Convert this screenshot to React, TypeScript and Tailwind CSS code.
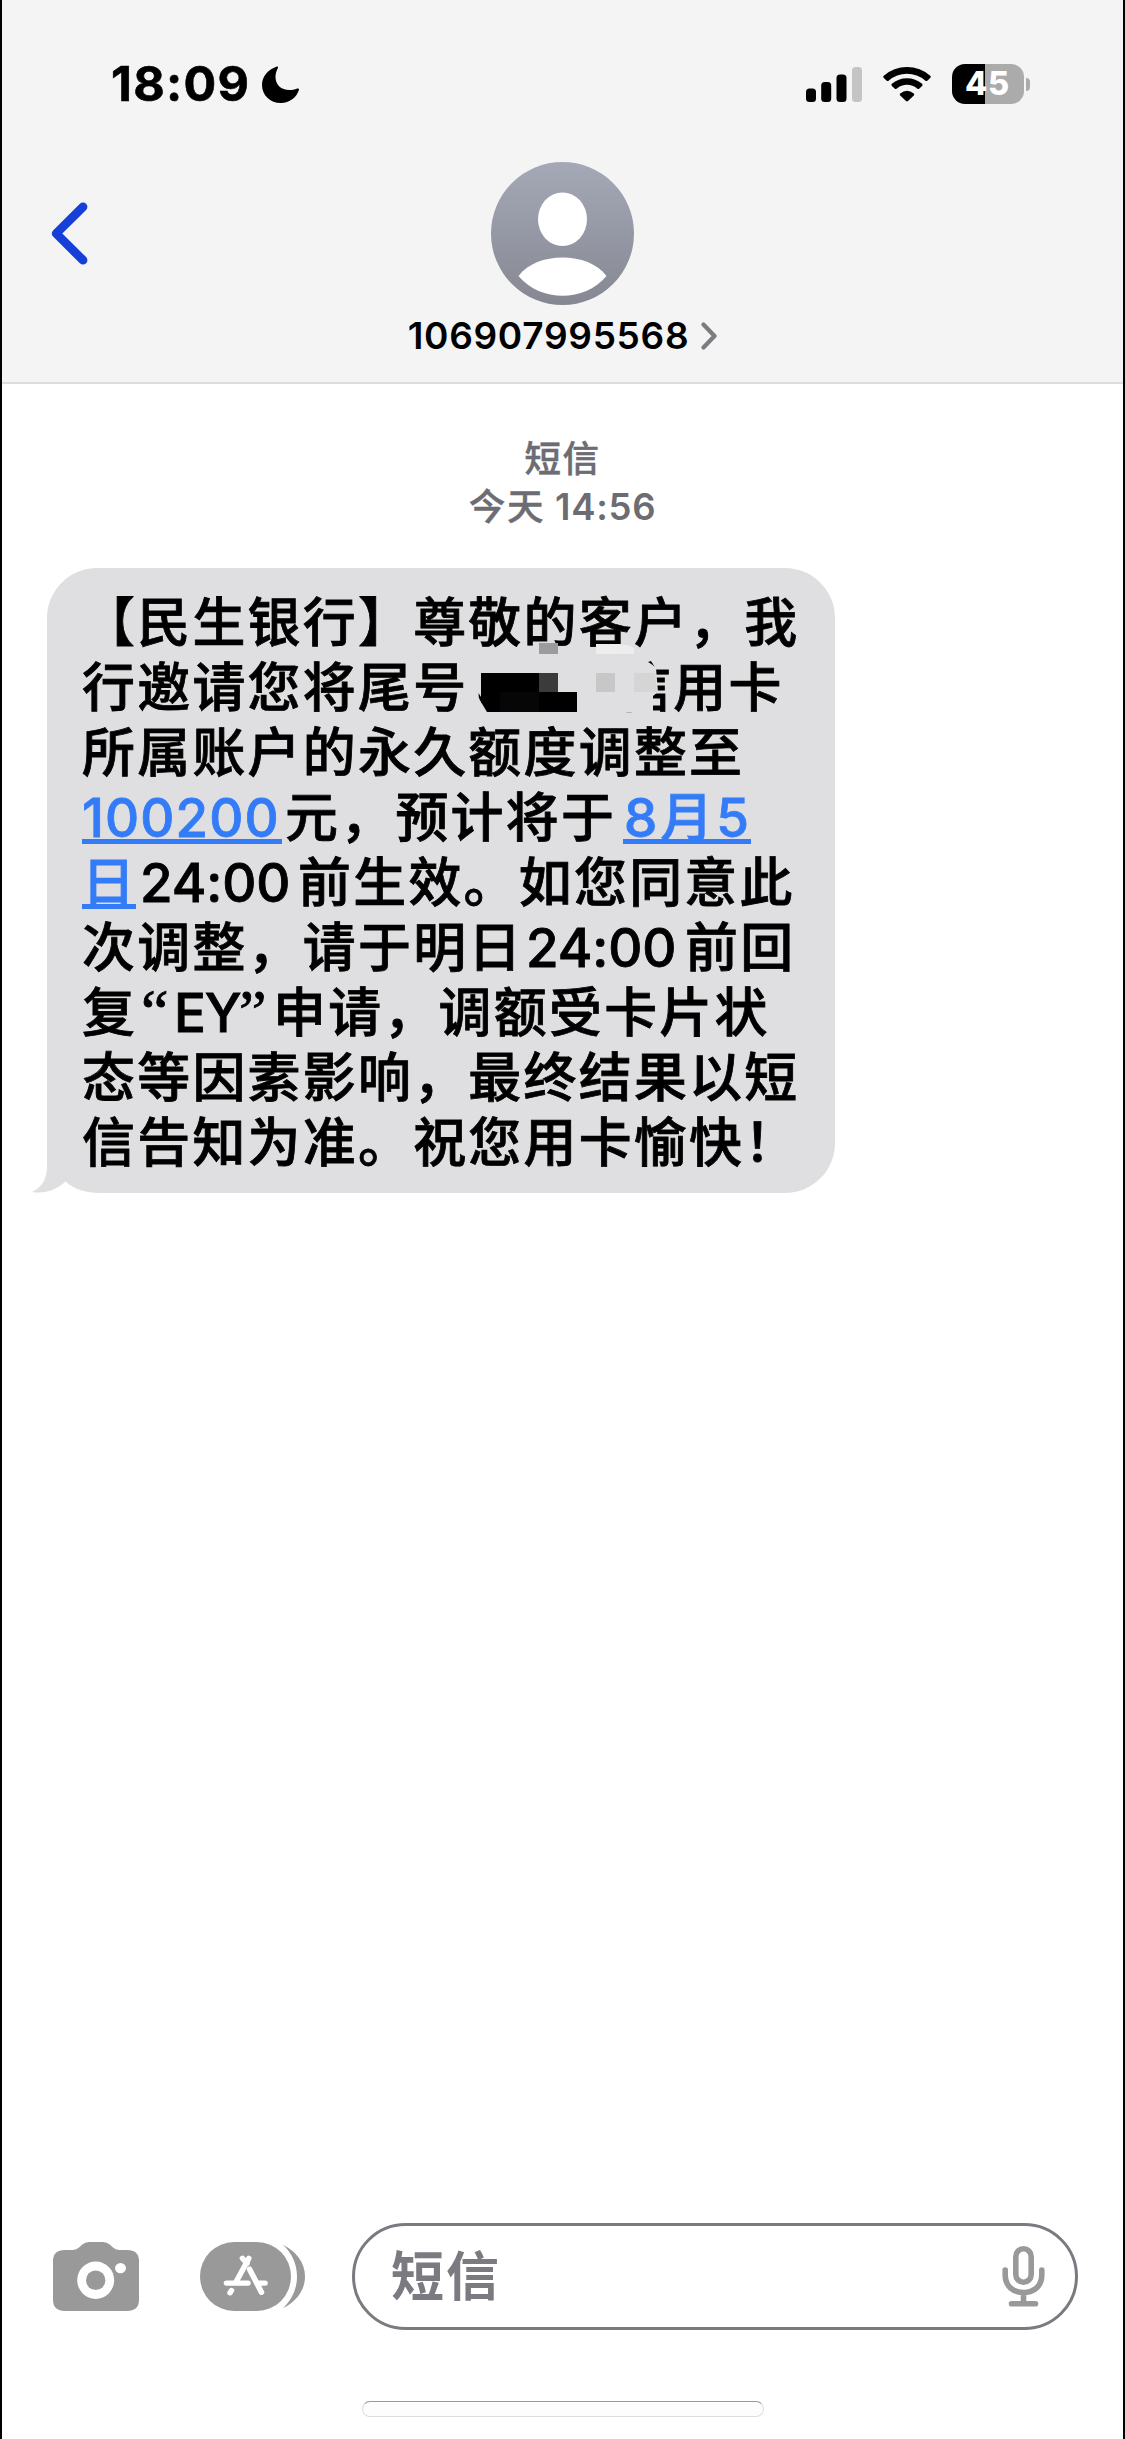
import React from "react";

type Segment = { text: string; kind?: "cjk" | "latin" | "link"; className?: string; quoted?: boolean };

const CJK = "tracking-[2.3px]";

const lines: Segment[][] = [
  [{ text: "【民生银行】尊敬的客户，我" }],
  [
    { text: "行邀请您将尾号", className: "w-[536px]" },
    { text: "信用卡" },
  ],
  [{ text: "所属账户的永久额度调整至" }],
  [
    { text: "100200", kind: "link", className: "w-[200px] mr-[3px] tracking-[1.1px]" },
    { text: "元，预计将于", className: "w-[338px]" },
    { text: "8月5", kind: "link", className: "w-[128px] pl-[1px] tracking-[3px]" },
  ],
  [
    { text: "日", kind: "link", className: "w-[54px]" },
    { text: "24:00", kind: "latin", className: "w-[162px] pl-[4px] tracking-[-0.1px]" },
    { text: "前生效。如您同意此" },
  ],
  [
    { text: "次调整，请于明日", className: "w-[442px]" },
    { text: "24:00", kind: "latin", className: "w-[161px] pl-[2px] tracking-[-0.1px]" },
    { text: "前回" },
  ],
  [
    { text: "复", className: "w-[59px]" },
    { text: "EY", kind: "latin", quoted: true, className: "w-[132px]" },
    { text: "申请，调额受卡片状" },
  ],
  [{ text: "态等因素影响，最终结果以短" }],
  [{ text: "信告知为准。祝您用卡愉快！" }],
];

function Line({ segments }: { segments: Segment[] }) {
  return (
    <div className="flex h-[65px] items-center whitespace-nowrap leading-[65px]">
      {segments.map((s, i) => {
        const width = s.className ?? "";
        if (s.kind === "link") {
          return (
            <span
              key={i}
              className={`relative block h-[65px] shrink-0 text-[#347cf7] [-webkit-text-stroke:0.8px_#347cf7] after:absolute after:inset-x-0 after:top-[53px] after:h-[5px] after:bg-[#347cf7] ${width}`}
            >
              {s.text}
            </span>
          );
        }
        if (s.quoted) {
          return (
            <span key={i} className={`flex h-[65px] shrink-0 items-baseline [-webkit-text-stroke:0.8px_#000] ${width}`}>
              <span className="w-[33px] font-['Liberation_Serif'] text-[62px] leading-[50px]">“</span>
              <span className="w-[65px] tracking-[-1.200px]">{s.text}</span>
              <span className="font-['Liberation_Serif'] text-[62px] leading-[50px]">”</span>
            </span>
          );
        }
        return (
          <span
            key={i}
            className={`block h-[65px] shrink-0 [-webkit-text-stroke:0.8px_#000] ${s.kind === "latin" ? "" : CJK} ${width}`}
          >
            {s.text}
          </span>
        );
      })}
    </div>
  );
}

function StatusBar() {
  return (
    <div className="flex h-[40px] items-center">
      <span className="ml-[109px] w-[147px] text-[48.500px] font-bold leading-[40px] tracking-[1.300px] [-webkit-text-stroke:0.6px_#000]">18:09</span>
      <svg className="ml-[4px] h-[37px] w-[37px]" viewBox="0 0 37 40" preserveAspectRatio="none">
        <path d="M14.8 0.6C5.800 4.200 0 11.300 0 20.500C0 31.500 8 40 19 40C27.500 40 34.500 34.500 37 25.800C37.300 24.600 36.400 23.900 35.200 24.400C32.500 25.600 30 26 27.500 26C19 26 13.500 20.500 13.500 12C13.500 8.500 14.300 5.500 15.900 2.200C16.400 1 15.800 0.200 14.800 0.600Z" />
      </svg>
      <svg className="ml-[507px] h-[35px] w-[56px]" viewBox="0 0 56 35">
        <rect x="0" y="21.500" width="10" height="13.500" rx="3.500" />
        <rect x="15.200" y="15" width="10" height="20" rx="3.500" />
        <rect x="30.500" y="7.500" width="10" height="27.500" rx="3.500" />
        <rect x="46" y="0" width="10" height="35" rx="3.500" fill="#c4c4c4" />
      </svg>
      <svg className="ml-[21px] h-[36px] w-[48px]" viewBox="0 0 48 39" preserveAspectRatio="none">
        <path d="M0.800 10.500A33.500 33.500 0 0 1 47.200 10.500Q48.400 11.700 47.200 12.900L44.500 15.600Q43.300 16.700 42.100 15.600A26.200 26.200 0 0 0 5.900 15.600Q4.700 16.700 3.500 15.600L0.800 12.900Q-0.400 11.700 0.800 10.500Z" />
        <path d="M8.900 19.300A21.700 21.700 0 0 1 39.100 19.300Q40.300 20.500 39.100 21.700L36.400 24.300Q35.200 25.500 34 24.400A14.600 14.600 0 0 0 14 24.400Q12.800 25.500 11.600 24.300L8.900 21.700Q7.700 20.500 8.900 19.300Z" />
        <path d="M17.200 29.800Q24 23.600 30.800 29.800Q31.800 31 30.800 32L25 37.900Q24 38.900 23 37.900L17.200 32Q16.200 31 17.200 29.800Z" />
      </svg>
      <div className="ml-[21px] flex h-[40px] w-[72px] items-center justify-center rounded-[13px] bg-[linear-gradient(to_right,#000_33px,#ababab_33px)] pr-px text-[32.500px] font-extrabold leading-[40px] tracking-[0.8px] text-white">
        45
      </div>
      <div className="ml-[2px] h-[13px] w-[4px] rounded-r-full bg-[#ababab]" />
    </div>
  );
}

function Avatar() {
  return (
    <svg className="h-[143px] w-[143px]" viewBox="0 0 143 143">
      <defs>
        <linearGradient id="avatar-fill" x1="0" y1="0" x2="0" y2="1">
          <stop offset="0" stopColor="#a5a9b7" />
          <stop offset="1" stopColor="#858892" />
        </linearGradient>
      </defs>
      <circle cx="71.500" cy="71.500" r="71.500" fill="url(#avatar-fill)" />
      <ellipse cx="71.500" cy="57.300" rx="24.500" ry="26.800" fill="#fff" />
      <path d="M27.500 114C37 101.500 53.500 95.500 71.500 95.500S106 101.500 115.500 114C104 127.500 88 133.700 71.500 133.700S39 127.500 27.500 114Z" fill="#fff" />
    </svg>
  );
}

function Mosaic() {
  return (
    <svg className="absolute left-[422px] top-[70px] h-[84px] w-[190px]" viewBox="469 638 190 84">
      <path d="M478 672Q490 654 520 654H622Q645 657 656 668L658 692L653 696V712H640L500 715H486L478 700Z" fill="#dfdfe1" />
      <path d="M481 673H539V692H577V712H487L481 702Z" />
      <path d="M478.500 693Q478 701 485 706L481 697Z" />
      <rect x="500" y="692" width="39" height="20" fill="#060607" />
      <rect x="539" y="673" width="19" height="19" fill="#3b3b3b" />
      <rect x="539" y="643" width="19" height="11" fill="#9c9c9e" />
      <path d="M596 644H620Q630 645 634 648V654H596Z" fill="#ededee" />
      <rect x="596" y="673" width="19" height="19" fill="#c7c7c8" />
      <path d="M634 673H655L657 692H634Z" fill="#d5d5d6" />
    </svg>
  );
}

function Bubble() {
  return (
    <div className="relative ml-[45px] h-[625px] w-[788px] rounded-[50px] bg-[#dfdfe1] pl-[35px] pt-[23px] text-[52.900px] font-medium">
      <svg className="absolute -left-[16px] bottom-0 h-[60px] w-[70px]" viewBox="0 0 70 60">
        <rect x="16" y="10" width="54" height="50" fill="#fff" />
        <path d="M16 0V34C16 46 11 54 1 59C14 61 25 57 34.500 48.500C43 56 54 60 70 60V0Z" fill="#dfdfe1" />
      </svg>
      <div className="relative">
        {lines.map((segments, i) => (
          <Line key={i} segments={segments} />
        ))}
      </div>
      <Mosaic />
    </div>
  );
}

function CameraIcon() {
  return (
    <svg className="h-[69px] w-[86px]" viewBox="0 0 86 74" preserveAspectRatio="none">
      <path d="M12 8.500H20Q23.500 8.500 26 6L29 3Q32 0 36 0H50Q54 0 57 3L60 6Q62.500 8.500 66 8.500H74Q86 8.500 86 20.500V62Q86 74 74 74H12Q0 74 0 62V20.500Q0 8.500 12 8.500Z" fill="#999" />
      <ellipse cx="42.700" cy="41" rx="18.500" ry="20" fill="#fff" />
      <ellipse cx="42.700" cy="41" rx="9.700" ry="10.500" fill="#999" />
      <circle cx="67.500" cy="28" r="5.500" fill="#fff" />
    </svg>
  );
}

function AppsIcon() {
  return (
    <svg className="h-[69px] w-[106px]" viewBox="0 0 106 74" preserveAspectRatio="none">
      <rect width="91" height="74" rx="34" ry="37" fill="#999" />
      <path d="M83 3C96 10 105 22 105 37S96 64 83 71C92 62 97 50 97 37S92 12 83 3Z" fill="#999" />
      <g stroke="#fff" strokeWidth="5.600" strokeLinecap="round" fill="none">
        <path d="M48.800 17.500L36.500 42" />
        <path d="M42.500 17.500L47 23" />
        <path d="M49.500 29L61.500 54" />
        <path d="M26.500 44H48M58 44H65" />
        <path d="M31.500 52L30 54.500" />
      </g>
    </svg>
  );
}

function MicIcon() {
  return (
    <svg className="h-[61px] w-[43px]" viewBox="0 0 43 61" fill="none" stroke="#999" strokeWidth="5.600" strokeLinecap="round">
      <rect x="13.800" y="2.800" width="15.400" height="33.500" rx="7.700" />
      <path d="M3.200 24V29C3.200 40 11 46.500 21.500 46.500S39.800 40 39.800 29V24M21.500 46.500V57M9.500 57.800H33.500" />
    </svg>
  );
}

export default function App() {
  return (
    <div className="flex h-[2439px] w-[1125px] flex-col border-x-2 border-black bg-white font-[Inter,'Noto_Sans_CJK_SC',sans-serif] text-black">
      <header className="flex h-[384px] shrink-0 flex-col border-b-2 border-[#dcdcdc] bg-[#f4f4f4] pt-[64px]">
        <StatusBar />
        <div className="relative flex flex-col items-center pt-[58px]">
          <svg className="absolute left-[49px] top-[98px] h-[63px] w-[37px]" viewBox="0 0 37 63" fill="none" stroke="#163fd8" strokeWidth="8.800" strokeLinecap="round" strokeLinejoin="round">
            <path d="M32 4.800L5.200 31.500L32 58.200" />
          </svg>
          <Avatar />
          <div className="mt-[9px] flex items-center gap-[12px] text-[37px] font-semibold leading-[44px]">
            <span className="tracking-[0.7px]">106907995568</span>
            <svg className="h-[28px] w-[16px]" viewBox="0 0 16 28" fill="none" stroke="#7c7c80" strokeWidth="4.200" strokeLinecap="round" strokeLinejoin="round">
              <path d="M2.500 2.500L13.500 14L2.500 25.500" />
            </svg>
          </div>
        </div>
      </header>

      <main className="flex grow flex-col">
        <div className="flex h-[184px] flex-col items-center pt-[50px] text-[36.500px] font-medium leading-[48px] text-[#6c6c72]">
          <span className="mt-[1px] tracking-[1.5px] [-webkit-text-stroke:0.5px_#6c6c72]">短信</span>
          <span className="flex">
            <span className="mr-[10px] tracking-[1.700px] [-webkit-text-stroke:0.5px_#6c6c72]">今天</span>
            <span className="font-semibold tracking-[0.7px]">14:56</span>
          </span>
        </div>
        <Bubble />
      </main>

      <footer className="flex h-[216px] shrink-0 flex-col">
        <div className="flex h-[107px] items-center pl-[51px]">
          <CameraIcon />
          <div className="ml-[61px] flex">
            <AppsIcon />
          </div>
          <div className="ml-[46px] flex h-[107px] w-[726px] items-center justify-between rounded-full border-[3px] border-[#7a7a80] pl-[36px] pr-[30px]">
            <span className="text-[53px] font-bold leading-[60px] tracking-[2px] text-[#7a7a80]">短信</span>
            <MicIcon />
          </div>
        </div>
        <div className="ml-[360px] mt-[71px] h-[16px] w-[402px] rounded-full border border-[#dddddd] border-t-[#999] bg-[#fdfdfd]" />
      </footer>
    </div>
  );
}
